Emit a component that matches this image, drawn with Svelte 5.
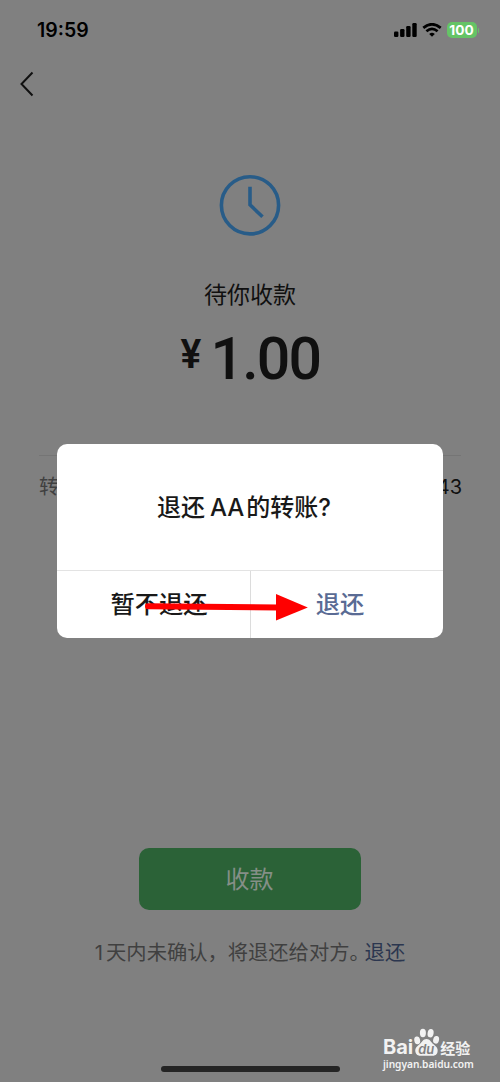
<script lang="ts">
	// Transfer detail screen with the "return transfer" confirmation on top.

	interface Props {
		time?: string;
		amount?: string;
		sender?: string;
	}

	let { time = '19:59', amount = '1.00', sender = 'AA' }: Props = $props();

	let dialogOpen = $state(true);

	function openDialog() {
		dialogOpen = true;
	}

	function closeDialog() {
		dialogOpen = false;
	}
</script>

<div class="screen">
	<header class="status-bar">
		<span class="time">{time}</span>
		<div class="indicators">
			<svg class="signal" width="23" height="14" viewBox="0 0 23 14" aria-hidden="true">
				<rect x="0" y="8.6" width="4.4" height="5.4" rx="1.2" />
				<rect x="6.1" y="6" width="4.4" height="8" rx="1.2" />
				<rect x="12.2" y="3" width="4.4" height="11" rx="1.2" />
				<rect x="18.3" y="0" width="4.4" height="14" rx="1.2" />
			</svg>
			<svg class="wifi" width="20" height="14" viewBox="0 0 20 14" aria-hidden="true">
				<path d="M1.3 4.9 Q10 -2.4 18.7 4.9" />
				<path d="M4.4 8.3 Q10 3.6 15.6 8.3" />
				<path class="dot" d="M7.2 10.9 Q10 8.7 12.8 10.9 L10 13.7Z" />
			</svg>
			<div class="battery">
				<span class="level">100</span>
				<span class="cap"></span>
			</div>
		</div>
	</header>

	<nav class="nav">
		<button class="back" aria-label="返回">
			<svg width="14" height="26" viewBox="0 0 14 26" aria-hidden="true">
				<path d="M12.5 1.5 L1.5 13 L12.5 24.5" />
			</svg>
		</button>
	</nav>

	<main class="content">
		<svg class="clock" width="62" height="62" viewBox="0 0 62 62" aria-hidden="true">
			<circle cx="31" cy="31.3" r="28.6" />
			<path d="M31 12.8 V30.8 L43.5 42.8" />
		</svg>
		<p class="state">待你收款</p>
		<div class="amount">
			<span class="currency">¥</span>
			<span class="value">{amount}</span>
		</div>
		<div class="detail">
			<span class="label">转账时间</span>
			<span class="when">19:58:43</span>
		</div>
	</main>

	<footer class="footer">
		<button class="receive">收款</button>
		<p class="hint"><span class="days">1</span>天内未确认，将退还给对方<span class="stop">。</span><button class="link" onclick={openDialog}>退还</button></p>
		<div class="home-indicator"></div>
	</footer>

	{#if dialogOpen}
		<div class="dialog" role="dialog" aria-modal="true" aria-labelledby="dialog-title">
			<h2 id="dialog-title" class="title">退还<span class="name">{sender}</span>的转账?</h2>
			<div class="actions">
				<button class="action" onclick={closeDialog}>暂不退还</button>
				<button class="action primary" onclick={closeDialog}>退还</button>
			</div>
		</div>

		<svg class="arrow" width="164" height="28" viewBox="0 0 164 28" aria-hidden="true">
			<path class="shaft" d="M4 12.3 L134 13.4" />
			<path class="head" d="M132 0 V26.4 L163.8 13.6Z" />
		</svg>
	{/if}

	<div class="watermark">
		<div class="brand">
			<span class="bai">Bai</span>
			<svg class="paw" width="27" height="29" viewBox="0 0 27 29" aria-hidden="true">
				<ellipse cx="4.2" cy="12.4" rx="2.9" ry="3.9" transform="rotate(-12 4.2 12.4)" />
				<ellipse cx="9.9" cy="5" rx="3" ry="4.2" />
				<ellipse cx="17.6" cy="5.2" rx="3" ry="4.2" transform="rotate(10 17.6 5.2)" />
				<ellipse cx="23.1" cy="11.8" rx="2.9" ry="3.9" transform="rotate(14 23.1 11.8)" />
				<path d="M13.5 11 C17 11 17.8 14.2 20.5 16.2 C23.8 18.8 25.4 21 24.4 24.4 C23.2 28.6 18.4 27.8 13.5 27.8 S3.8 28.6 2.6 24.4 C1.6 21 3.2 18.8 6.5 16.2 C9.2 14.2 10 11 13.5 11Z" />
				<text x="13.3" y="25.6">du</text>
			</svg>
			<span class="jingyan">经验</span>
		</div>
		<span class="site">jingyan.baidu.com</span>
	</div>
</div>

<style>
	:global(body) {
		background: #808080;
	}

	.screen {
		position: relative;
		display: flex;
		flex-direction: column;
		width: 500px;
		height: 1082px;
		overflow: hidden;
		background: #808080;
		color: #101010;
		font-family: Inter, 'Noto Sans CJK SC', sans-serif;
	}

	button {
		padding: 0;
		border: none;
		background: none;
		color: inherit;
		font: inherit;
		cursor: pointer;
	}

	p,
	h2 {
		margin: 0;
	}

	.status-bar {
		display: flex;
		align-items: center;
		justify-content: space-between;
		height: 60px;
		padding: 0 21px 0 37px;
		box-sizing: border-box;
		color: #000;
	}

	.time {
		font-size: 19.5px;
		font-weight: 600;
	}

	.indicators {
		display: flex;
		align-items: center;
		gap: 5px;
	}

	.wifi {
		fill: none;
		stroke: #000;
		stroke-width: 2.7;
	}

	.wifi .dot {
		fill: #000;
		stroke: none;
	}

	.battery {
		display: flex;
		align-items: center;
		gap: 1px;
	}

	.level {
		width: 30px;
		height: 16px;
		border-radius: 5px;
		background: #65c466;
		color: #fff;
		font-size: 13.7px;
		font-weight: 700;
		line-height: 16px;
		text-align: center;
	}

	.cap {
		width: 1.5px;
		height: 5px;
		border-radius: 0 2px 2px 0;
		background: #65c466;
	}

	.nav {
		height: 48px;
		padding-left: 20px;
	}

	.back {
		display: flex;
		align-items: center;
		height: 48px;
	}

	.back path {
		fill: none;
		stroke: #101010;
		stroke-width: 2;
	}

	.content {
		display: flex;
		flex: 1;
		flex-direction: column;
		align-items: center;
		padding: 66px 39px 0;
	}

	.clock {
		fill: none;
		stroke: #285c88;
		stroke-width: 3.6;
	}

	.state {
		margin-top: 42px;
		font-size: 23px;
		line-height: 34px;
	}

	.amount {
		display: flex;
		align-items: flex-start;
		height: 60px;
		margin-top: 17px;
		font-family: Roboto, sans-serif;
		gap: 9px;
	}

	.currency {
		margin-top: 5px;
		font-size: 41px;
		font-weight: 600;
		line-height: 40px;
		transform: scaleX(0.95);
	}

	.value {
		font-size: 59px;
		font-weight: 500;
		line-height: 60px;
		letter-spacing: -1.8px;
	}

	.detail {
		display: flex;
		justify-content: space-between;
		align-self: stretch;
		margin-top: 66px;
		padding-top: 16px;
		border-top: 1px solid #757575;
		font-size: 20px;
		line-height: 30px;
	}

	.label {
		color: #404040;
	}

	.when {
		margin-right: -1px;
	}

	.footer {
		display: flex;
		flex-direction: column;
		align-items: center;
	}

	.receive {
		width: 222px;
		height: 62px;
		padding: 0 1px 4px 0;
		border-radius: 10px;
		background: #2b6237;
		color: #858f87;
		font-size: 24px;
	}

	.hint {
		margin-top: 28px;
		color: #404040;
		font-size: 20.3px;
		line-height: 30px;
		white-space: nowrap;
	}

	.days {
		margin-right: 3px;
	}

	.stop {
		margin-right: 5px;
		font-feature-settings: 'halt';
	}

	.link {
		color: #2b364f;
	}

	.home-indicator {
		width: 179px;
		height: 6px;
		margin: 98px 0 10px;
		border-radius: 3px;
		background: #242424;
	}

	.dialog {
		position: absolute;
		top: 444px;
		left: 57px;
		display: flex;
		flex-direction: column;
		width: 386px;
		height: 193.5px;
		border-radius: 10px;
		background: #fff;
		color: #191919;
		font-weight: 500;
	}

	.title {
		flex: 1;
		padding: 2px 12px 0 0;
		font-size: 24px;
		font-weight: 500;
		line-height: 123px;
		text-align: center;
	}

	.name {
		margin: 0 2px 0 5px;
	}

	.actions {
		display: grid;
		grid-template-columns: 1fr 1fr;
		height: 67px;
		border-top: 1px solid #e3e3e3;
	}

	.action {
		padding-left: 11px;
		font-size: 24.3px;
		line-height: 66px;
	}

	.action.primary {
		padding: 0 14px 0 0;
		border-left: 1px solid #dcdcdc;
		color: #5a6b94;
	}

	.arrow {
		position: absolute;
		top: 594px;
		left: 144px;
	}

	.shaft {
		stroke: #f00;
		stroke-width: 6;
		stroke-linecap: round;
	}

	.head {
		fill: #f00;
	}

	.watermark {
		position: absolute;
		top: 1028px;
		left: 383px;
		display: flex;
		flex-direction: column;
		color: #f2f2f2;
	}

	.brand {
		display: flex;
		align-items: flex-end;
		height: 29px;
	}

	.bai {
		font-size: 20px;
		font-weight: 700;
		line-height: 20px;
	}

	.paw {
		fill: #f2f2f2;
	}

	.paw text {
		fill: #808080;
		font-size: 13px;
		font-style: italic;
		font-weight: 600;
		text-anchor: middle;
	}

	.jingyan {
		font-size: 15px;
		font-weight: 700;
		line-height: 16px;
	}

	.site {
		font-family: 'Noto Sans', sans-serif;
		font-size: 10.2px;
		font-weight: 600;
		line-height: 15px;
		letter-spacing: -0.05px;
	}
</style>
